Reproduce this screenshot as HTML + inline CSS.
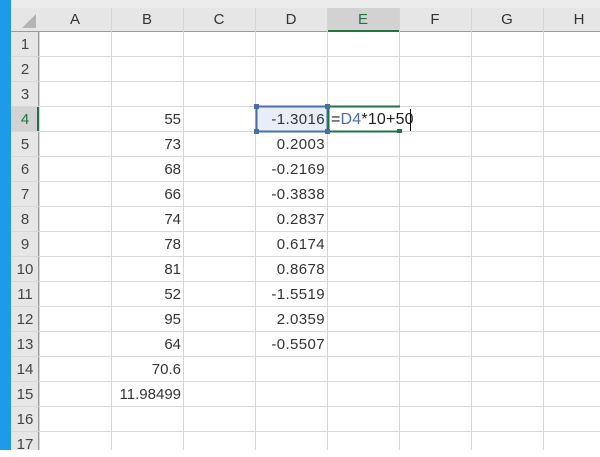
<!DOCTYPE html><html><head><style>
body{margin:0;width:600px;height:450px;overflow:hidden;background:#fff;font-family:"Liberation Sans",sans-serif;position:relative}
.a{position:absolute}
.t{font-size:15px;color:#333;line-height:25px}
</style></head><body>
<div class="a" style="left:0;top:0;width:11px;height:450px;background:#1e9be6"></div>
<div class="a" style="left:11px;top:0;width:589px;height:8px;background:#ececec"></div>
<div class="a" style="left:11px;top:8px;width:589px;height:24px;background:#e6e6e6;border-bottom:1px solid #9c9c9c;box-sizing:border-box"></div>
<div class="a" style="left:11px;top:32px;width:28px;height:418px;background:#e6e6e6;border-right:1px solid #9c9c9c;box-sizing:border-box"></div>
<svg class="a" style="left:20px;top:12px" width="18" height="18"><polygon points="16,2 16,16 2,16" fill="#b4b4b4"/></svg>
<div class="a" style="left:327px;top:8px;width:72px;height:24px;background:#d2d2d2;border-bottom:2px solid #217346;box-sizing:border-box"></div>
<div class="a" style="left:11px;top:107px;width:28px;height:25px;background:#d2d2d2;border-right:2px solid #217346;box-sizing:border-box"></div>
<svg class="a" style="left:0;top:0" width="600" height="450">
<g stroke="#d4d4d4" stroke-width="1">
<line x1="39.5" y1="32" x2="39.5" y2="450"/><line x1="111.5" y1="8" x2="111.5" y2="450"/><line x1="183.5" y1="8" x2="183.5" y2="450"/><line x1="255.5" y1="8" x2="255.5" y2="450"/><line x1="327.5" y1="8" x2="327.5" y2="450"/><line x1="399.5" y1="8" x2="399.5" y2="450"/><line x1="471.5" y1="8" x2="471.5" y2="450"/><line x1="543.5" y1="8" x2="543.5" y2="450"/>
</g>
<g stroke="#d8d8d8">
<line x1="11" y1="56.5" x2="600" y2="56.5"/><line x1="11" y1="81.5" x2="600" y2="81.5"/><line x1="11" y1="106.5" x2="600" y2="106.5"/><line x1="11" y1="131.5" x2="600" y2="131.5"/><line x1="11" y1="156.5" x2="600" y2="156.5"/><line x1="11" y1="181.5" x2="600" y2="181.5"/><line x1="11" y1="206.5" x2="600" y2="206.5"/><line x1="11" y1="231.5" x2="600" y2="231.5"/><line x1="11" y1="256.5" x2="600" y2="256.5"/><line x1="11" y1="281.5" x2="600" y2="281.5"/><line x1="11" y1="306.5" x2="600" y2="306.5"/><line x1="11" y1="331.5" x2="600" y2="331.5"/><line x1="11" y1="356.5" x2="600" y2="356.5"/><line x1="11" y1="381.5" x2="600" y2="381.5"/><line x1="11" y1="406.5" x2="600" y2="406.5"/><line x1="11" y1="431.5" x2="600" y2="431.5"/>
</g>
<rect x="328" y="107" width="82" height="24" fill="#fff"/>
<rect x="256" y="106" width="71" height="25" fill="#e8eef7"/>
<rect x="256.5" y="106.5" width="71" height="25" fill="none" stroke="#4a6ea8" stroke-width="2"/>
<line x1="327" y1="106.5" x2="400" y2="106.5" stroke="#217346" stroke-width="2"/>
<line x1="327" y1="131.5" x2="400" y2="131.5" stroke="#217346" stroke-width="2"/>
<line x1="328.5" y1="106" x2="328.5" y2="132" stroke="#217346" stroke-width="2"/>
<g fill="#4a6ea8"><rect x="254" y="104" width="5" height="5"/><rect x="325" y="104" width="5" height="5"/><rect x="254" y="129" width="5" height="5"/><rect x="325" y="129" width="5" height="5"/></g>
<rect x="397" y="129" width="5" height="4" fill="#217346"/>
<line x1="410.5" y1="109" x2="410.5" y2="131" stroke="#000"/>
</svg>
<div class="a t" style="top:8px;left:39px;width:72px;text-align:center;line-height:24px">A</div>
<div class="a t" style="top:8px;left:111px;width:72px;text-align:center;line-height:24px">B</div>
<div class="a t" style="top:8px;left:183px;width:72px;text-align:center;line-height:24px">C</div>
<div class="a t" style="top:8px;left:255px;width:72px;text-align:center;line-height:24px">D</div>
<div class="a t" style="top:8px;left:327px;width:72px;text-align:center;line-height:24px;color:#217346">E</div>
<div class="a t" style="top:8px;left:399px;width:72px;text-align:center;line-height:24px">F</div>
<div class="a t" style="top:8px;left:471px;width:72px;text-align:center;line-height:24px">G</div>
<div class="a t" style="top:8px;left:543px;width:72px;text-align:center;line-height:24px">H</div>
<div class="a t" style="left:11px;top:32px;width:28px;text-align:center;color:#444">1<br>2<br>3<br><span style="color:#217346">4</span><br>5<br>6<br>7<br>8<br>9<br>10<br>11<br>12<br>13<br>14<br>15<br>16<br>17</div>
<div class="a t" style="left:111px;top:107px;width:70px;text-align:right">55<br>73<br>68<br>66<br>74<br>78<br>81<br>52<br>95<br>64<br>70.6<br>11.98499</div>
<div class="a t" style="left:255px;top:107px;width:70px;text-align:right;letter-spacing:0.4px">-1.3016<br>0.2003<br>-0.2169<br>-0.3838<br>0.2837<br>0.6174<br>0.8678<br>-1.5519<br>2.0359<br>-0.5507</div>
<div class="a t" style="left:331px;top:107px;color:#222;font-size:16px;letter-spacing:0.2px">=<span style="color:#4a6ea8">D4</span>*10+50</div>
</body></html>
